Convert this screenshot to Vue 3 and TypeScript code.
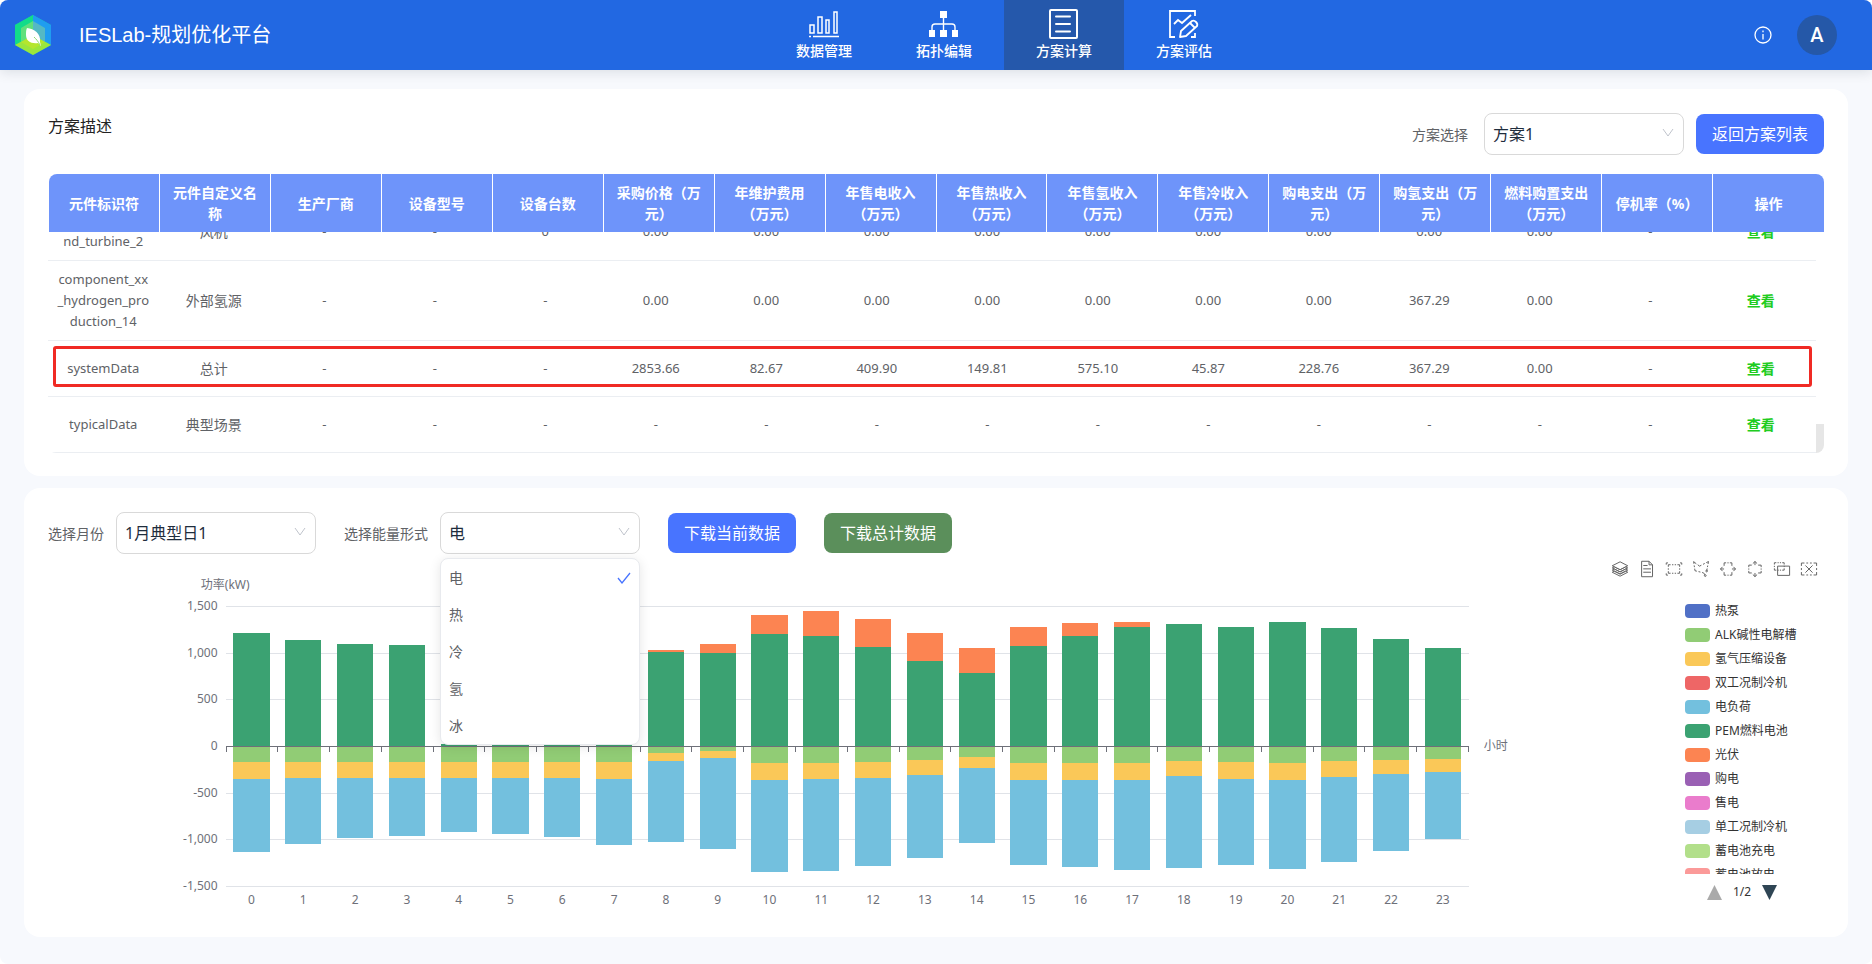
<script setup lang="ts">
import { computed, ref } from 'vue'

interface Series {
  name: string
  color: string
}

interface ToolIcon {
  label: string
  box: string
  d: string
}

const navItems = ['数据管理', '拓扑编辑', '方案计算', '方案评估']
const activeNav = ref('方案计算')

const plan = ref('方案1')
const month = ref('1月典型日1')
const energy = ref('电')
const energyOptions = ['电', '热', '冷', '氢', '冰']

const columns = [
  '元件标识符', '元件自定义名称', '生产厂商', '设备型号', '设备台数', '采购价格（万元）',
  '年维护费用（万元）', '年售电收入（万元）', '年售热收入（万元）', '年售氢收入（万元）',
  '年售冷收入（万元）', '购电支出（万元）', '购氢支出（万元）', '燃料购置支出（万元）',
  '停机率（%）', '操作',
]

const rows = [
  ['component_wind_turbine_2', '风机', '-', '-', '0', '0.00', '0.00', '0.00', '0.00', '0.00', '0.00', '0.00', '0.00', '0.00', '-'],
  ['component_xx_hydrogen_production_14', '外部氢源', '-', '-', '-', '0.00', '0.00', '0.00', '0.00', '0.00', '0.00', '0.00', '367.29', '0.00', '-'],
  ['systemData', '总计', '-', '-', '-', '2853.66', '82.67', '409.90', '149.81', '575.10', '45.87', '228.76', '367.29', '0.00', '-'],
  ['typicalData', '典型场景', '-', '-', '-', '-', '-', '-', '-', '-', '-', '-', '-', '-', '-'],
]

const legend: Series[] = [
  { name: '热泵', color: '#5070c6' },
  { name: 'ALK碱性电解槽', color: '#91cc75' },
  { name: '氢气压缩设备', color: '#fac858' },
  { name: '双工况制冷机', color: '#ee6666' },
  { name: '电负荷', color: '#73c0de' },
  { name: 'PEM燃料电池', color: '#3ba272' },
  { name: '光伏', color: '#fc8452' },
  { name: '购电', color: '#9a60b4' },
  { name: '售电', color: '#ea7ccc' },
  { name: '单工况制冷机', color: '#a6cee3' },
  { name: '蓄电池充电', color: '#b2df8a' },
  { name: '蓄电池放电', color: '#fb9a99' },
]

// Per hour: fuel cell, photovoltaic, electrolyser, compressor, load (kW)
const hourly: number[][] = [
  [1211, 0, 168, 182, 789], [1136, 0, 168, 172, 713], [1096, 0, 168, 172, 649],
  [1082, 0, 168, 172, 628], [17, 0, 168, 172, 585], [17, 0, 168, 172, 603],
  [17, 0, 168, 172, 635], [17, 0, 168, 182, 714], [1003, 22, 79, 82, 867],
  [993, 103, 57, 72, 971], [1200, 207, 179, 185, 989], [1175, 275, 179, 175, 985],
  [1057, 304, 168, 175, 946], [914, 297, 154, 153, 893], [778, 268, 114, 125, 804],
  [1071, 207, 179, 182, 910], [1175, 143, 179, 185, 936], [1275, 53, 179, 185, 968],
  [1303, 0, 161, 164, 986], [1275, 0, 168, 182, 928], [1332, 0, 179, 185, 950],
  [1268, 0, 161, 168, 910], [1146, 0, 146, 154, 821], [1050, 0, 136, 146, 711],
]
const axisMax = 1500
const ticks = [1500, 1000, 500, 0, -500, -1000, -1500]
const share = (v: number) => `${(v / (axisMax * 2)) * 100}%`

const bars = computed(() =>
  hourly.map(([pem, pv, alk, comp, load], hour) => ({
    hour,
    base: share(axisMax - alk - comp - load),
    parts: [
      { kind: 'pv', height: share(pv) },
      { kind: 'pem', height: share(pem) },
      { kind: 'alk', height: share(alk) },
      { kind: 'comp', height: share(comp) },
      { kind: 'load', height: share(load) },
    ],
  })),
)

const tools: ToolIcon[] = [
  { label: '切换为堆叠', box: '-1 1 62 58', d: 'M8.2,38.4l-8.4,4.1l30.6,15.3L60,42.5l-8.1-4.1l-21.5,11L8.2,38.4z M51.9,30l-8.1,4.2l-13.4,6.9l-13.9-6.9L8.2,30l-8.4,4.2l8.4,4.2l22.2,11l21.5-11l8.1-4.2L51.9,30z M51.9,21.7l-8.1,4.2L35.7,30l-5.3,2.8L24.9,30l-8.4-4.1l-8.3-4.2l-8.4,4.2L8.2,30l8.3,4.2l13.9,6.9l13.4-6.9l8.1-4.2l8.1-4.1L51.9,21.7z M30.4,2.2L-0.2,17.5l8.4,4.1l8.3,4.2l8.4,4.2l5.5,2.7l5.3-2.7l8.1-4.2l8.1-4.2l8.1-4.1L30.4,2.2z' },
  { label: '数据视图', box: '2 1 58 58', d: 'M17.5,17.3H33 M45.4,29.5h-28 M11.5,2v56H51V14.8L38.4,2H11.5z M38.4,2.2v12.7H51 M45.4,41.7h-28' },
  { label: '矩形选择', box: '-1 -2 92 74', d: 'M0.4,10V-0.2h9.8 M89.6,10V-0.2h-9.8 M0.4,60v10.2h9.8 M89.6,60v10.2h-9.8 M12.3,22.4V10.5h13.1 M33.6,10.5h7.8 M49.1,10.5h7.8 M77.5,22.4V10.5h-13 M12.3,31.1v8.2 M77.7,31.1v8.2 M12.3,47.6v11.9h13.1 M33.6,59.5h7.6 M49.1,59.5h7.7 M77.5,47.6v11.9h-13' },
  { label: '圈选', box: '8 3 55 56', d: 'M55.2,34.9c1.7,0,3.1,1.4,3.1,3.1s-1.4,3.1-3.1,3.1s-3.1-1.4-3.1-3.1S53.5,34.9,55.2,34.9z M50.4,51c1.7,0,3.1,1.4,3.1,3.1c0,1.7-1.4,3.1-3.1,3.1c-1.7,0-3.1-1.4-3.1-3.1C47.3,52.4,48.7,51,50.4,51z M55.6,37.1l1.5-7.8 M60.1,13.5l1.6-8.7l-7.8,4 M59,19l-1,5.3 M24,16.1l6.4,4.9l6.4-3.3 M48.5,11.6l-5.9,3.1 M19.1,12.8L9.7,5.1l1.1,7.7 M13.4,29.8l1,7.3l6.6,1.6 M11.6,18.4l1,6.1 M26.6,40.4L27.3,40.2l6.1,1.6 M49.9,52.1l-5.6-7.6l-4.9-1.2' },
  { label: '横向选择', box: '1 -1 73 62', d: 'M19.7,15.6V1.9H29 M34.8,1.9H40.4 M55.3,15.6V1.9H45.9 M19.7,44.4V58.1H29 M34.8,58.1H40.4 M55.3,44.4V58.1H45.9 M12.5,20.3l-9.4,9.6l9.6,9.8 M3.1,29.9h16.5 M62.5,20.3l9.4,9.6L62.3,39.7 M71.9,29.9H55.4' },
  { label: '纵向选择', box: '4 -6 70 70', d: 'M52.7,12h13.2v9 M65.9,26.6V32 M52.7,46.3h13.2v-9 M24.9,12H11.8v9 M11.8,26.6V32 M24.9,46.3H11.8v-9 M48.2,5.1l-9.3-9l-9.4,9.2 M38.9-3.9V12 M48.2,53.3l-9.3,9l-9.4-9.2 M38.9,62.3V46.4' },
  { label: '保持选择', box: '2 -1 84 70', d: 'M4,10.5V1h10.3 M20.7,1h6.1 M33,1h6.1 M55.4,10.5V1H45.2 M4,17.3v6.6 M55.6,17.3v6.6 M4,30.5V40h10.3 M20.7,40h6.1 M33,40h6.1 M55.4,30.5V40H45.2 M21,18.9h62.9v48.6H21V18.9z' },
  { label: '清除选择', box: '3 2 69 56', d: 'M22,14.7l30.9,31 M52.9,14.7L22,45.7 M4.7,16.8V4.2h13.1 M26,4.2h7.8 M41.6,4.2h7.8 M70.3,16.8V4.2H57.2 M4.7,25.9v8.6 M70.3,25.9v8.6 M4.7,43.2v12.6h13.1 M26,55.8h7.8 M41.6,55.8h7.8 M70.3,43.2v12.6H57.2' },
]
</script>

<template>
  <div class="page">
    <header class="topbar">
      <div class="brand">
        <svg class="logo" viewBox="0 0 36 40" aria-hidden="true">
          <path d="M18 0 36 10v20L18 40 0 30V10Z" fill="#14cfa0" />
          <path d="M18 0 0 10v20l18-10Z" fill="#12dc8a" />
          <path d="M18 0 36 10v20L18 20Z" fill="#1f9df0" />
          <path d="M0 30 18 20l18 10-18 10Z" fill="#9be63c" />
          <path d="M18 6 6 13v14l12-7Z" fill="#5fe07c" />
          <path d="M18 6 30 13v14l-12-7Z" fill="#54b9c4" />
          <path d="M6 27 18 20l12 7-12 7Z" fill="#b4e62e" />
          <path d="M12 13c7 1 14 5 13 14l1 4-3-3c-7 1-12-2-12-8 0-3 0-5 1-7Z" fill="#fff" />
          <path d="M19 22c2 2 4 4 6 8" fill="none" stroke="#8ad96a" />
        </svg>
        <h1>IESLab-规划优化平台</h1>
      </div>
      <nav class="nav">
        <button
          v-for="(item, i) in navItems"
          :key="item"
          type="button"
          :class="['nav-item', { active: item === activeNav }]"
          @click="activeNav = item"
        >
          <svg v-if="i === 0" viewBox="0 0 32 32" aria-hidden="true">
            <path d="M2 17h4v8H2ZM10 9h4v16h-4ZM18 12h3v13h-3ZM26 4h3v21h-3Z" stroke-width="1.5" />
            <path d="M1 28.5h2M5 28.5h26" stroke-width="1.5" />
          </svg>
          <svg v-else-if="i === 1" viewBox="0 0 32 32" aria-hidden="true">
            <path d="M15.5 9v14M4 23v-4q0-3 3-3h17q3 0 3 3v4" stroke-width="1.4" />
            <path class="solid" d="M12 3h7v7h-7ZM1 22h6v7H1ZM12 22h7v7h-7ZM24 22h6v7h-6Z" />
          </svg>
          <svg v-else-if="i === 2" viewBox="0 0 32 32" aria-hidden="true">
            <rect x="2" y="2" width="27" height="28" rx="1" stroke-width="2" />
            <path d="M8 8.5h14M8 16h14M8 23.5h14" stroke-width="2" stroke-linecap="round" />
          </svg>
          <svg v-else viewBox="0 0 32 32" aria-hidden="true">
            <path d="M7 29H2V3h25v5M27 25v4h-4" stroke-width="1.8" />
            <path d="m6 16 4-4 4 3 9-8" stroke-width="1.8" />
            <path d="m12 29 1-6 11-10q2-1 4 1t1 4L18 28ZM22 15l5 5" stroke-width="1.8" stroke-linejoin="round" />
          </svg>
          <span>{{ item }}</span>
        </button>
      </nav>
      <div class="user">
        <button type="button" class="info" aria-label="信息">
          <svg viewBox="0 0 18 18" aria-hidden="true">
            <circle cx="9" cy="9" r="8" />
            <path d="M9 8v5.5M9 4.5v1.8" />
          </svg>
        </button>
        <button type="button" class="avatar">A</button>
      </div>
    </header>

    <main>
      <section class="card">
        <div class="card-head">
          <h2>方案描述</h2>
          <div class="plan-tools">
            <label for="plan">方案选择</label>
            <div class="select">
              <select id="plan" v-model="plan"><option>方案1</option></select>
              <svg viewBox="0 0 12 12" aria-hidden="true"><path d="m1 2 5 7 5-7" /></svg>
            </div>
            <button type="button" class="btn">返回方案列表</button>
          </div>
        </div>

        <div class="grid-table">
          <div class="head-wrap">
            <table>
              <thead>
                <tr><th v-for="c in columns" :key="c" scope="col">{{ c }}</th></tr>
              </thead>
            </table>
          </div>
          <div class="body-wrap">
            <table class="body-table">
              <tbody>
                <tr v-for="row in rows" :key="row[0]" :class="{ marked: row[0] === 'systemData' }">
                  <td v-for="(cell, i) in row" :key="i" :class="{ name: i === 1 }">{{ cell }}</td>
                  <td class="action"><a href="#">查看</a></td>
                </tr>
              </tbody>
            </table>
            <div class="scroll-rail"><div class="thumb"></div></div>
          </div>
        </div>
      </section>

      <section class="card">
        <div class="filters">
          <label for="month">选择月份</label>
          <div class="select">
            <select id="month" v-model="month"><option>1月典型日1</option></select>
            <svg viewBox="0 0 12 12" aria-hidden="true"><path d="m1 2 5 7 5-7" /></svg>
          </div>
          <label for="energy" class="next">选择能量形式</label>
          <div class="select">
            <select id="energy" v-model="energy">
              <option v-for="o in energyOptions" :key="o">{{ o }}</option>
            </select>
            <svg viewBox="0 0 12 12" aria-hidden="true"><path d="m1 2 5 7 5-7" /></svg>
            <ul class="menu" role="listbox" aria-label="选择能量形式">
              <li
                v-for="o in energyOptions"
                :key="o"
                role="option"
                :aria-selected="o === energy"
                @click="energy = o"
              >
                {{ o }}
                <svg v-if="o === energy" viewBox="0 0 14 12" aria-hidden="true"><path d="m1 6 4 5 8-10" /></svg>
              </li>
            </ul>
          </div>
          <button type="button" class="btn next">下载当前数据</button>
          <button type="button" class="btn green next">下载总计数据</button>
        </div>

        <div class="chart">
          <div class="y-name">功率(kW)</div>
          <div class="toolbox">
            <button v-for="t in tools" :key="t.label" type="button" :aria-label="t.label">
              <svg :viewBox="t.box" aria-hidden="true"><path :d="t.d" /></svg>
            </button>
          </div>
          <div class="y-axis">
            <span v-for="t in ticks" :key="t">{{ t.toLocaleString('en-US') }}</span>
          </div>
          <div class="plot">
            <div class="lines"><i v-for="t in ticks" :key="t"></i></div>
            <div class="bars">
              <div v-for="b in bars" :key="b.hour" class="slot">
                <div v-for="p in b.parts" :key="p.kind" :class="['bar', p.kind]" :style="{ height: p.height }"></div>
                <div :style="{ height: b.base }"></div>
              </div>
            </div>
            <div class="zero"><i v-for="b in bars" :key="b.hour"></i></div>
          </div>
          <div class="x-axis"><span v-for="b in bars" :key="b.hour">{{ b.hour }}</span></div>
          <div class="x-name">小时</div>
          <div class="legend">
            <ul>
              <li v-for="s in legend" :key="s.name">
                <i :style="{ background: s.color }"></i><span>{{ s.name }}</span>
              </li>
            </ul>
            <div class="pager">
              <button type="button" aria-label="上一页" disabled>
                <svg viewBox="0 0 15 15"><path d="M0 15 7.5 0 15 15Z" fill="#aaa" /></svg>
              </button>
              <span>1/2</span>
              <button type="button" aria-label="下一页">
                <svg viewBox="0 0 15 15"><path d="M0 0h15L7.5 15Z" fill="#2f4554" /></svg>
              </button>
            </div>
          </div>
        </div>
      </section>
    </main>
  </div>
</template>

<style>
body {
  margin: 0;
  background: #fff;
}
</style>

<style scoped>
* {
  box-sizing: border-box;
}

.page {
  min-height: 100vh;
  overflow: hidden;
  border-radius: 8px;
  background: #f7f9fd;
  color: #606266;
  font: 14px/21px "Noto Sans", "Noto Sans CJK SC", sans-serif;
}

button {
  padding: 0;
  border: 0;
  background: none;
  color: inherit;
  font: inherit;
  cursor: pointer;
}

ul {
  margin: 0;
  padding: 0;
  list-style: none;
}

.topbar {
  display: grid;
  grid-template-columns: 191fr 480px 157fr;
  align-items: center;
  height: 70px;
  background: #2268e2;
  color: #fff;
  box-shadow: 0 2px 12px rgba(0, 21, 41, 0.12);
}

.brand {
  display: flex;
  align-items: center;
  gap: 28px;
  padding-left: 15px;
}

.logo {
  width: 36px;
  height: 40px;
}

h1 {
  margin: 0;
  font: 400 20px/30px "Liberation Sans", "Noto Sans CJK SC", sans-serif;
}

.nav {
  display: flex;
}

.nav-item {
  display: flex;
  flex: 1;
  flex-direction: column;
  align-items: center;
  height: 70px;
  padding-top: 8px;
  font-weight: 500;
}

.nav-item.active {
  background: #2558ab;
}

.nav-item svg {
  width: 32px;
  height: 32px;
  fill: none;
  stroke: #fff;
}

.nav-item .solid {
  fill: #fff;
  stroke: none;
}

.user {
  display: flex;
  align-items: center;
  justify-content: flex-end;
  gap: 25px;
  padding-right: 35px;
}

.info {
  width: 18px;
  height: 18px;
}

.info svg {
  display: block;
  fill: none;
  stroke: #fff;
  stroke-width: 1.3;
}

.avatar {
  width: 40px;
  height: 40px;
  border-radius: 50%;
  background: #2558a8;
  font: 500 20px/40px Roboto, "Liberation Sans", sans-serif;
}

main {
  display: flex;
  flex-direction: column;
  gap: 12px;
  padding: 19px 24px 24px;
}

.card {
  padding: 24px 24px 23px;
  border-radius: 16px;
  background: #fff;
}

.card-head {
  display: flex;
  justify-content: space-between;
  margin-bottom: 19px;
}

h2 {
  margin: 0;
  color: #222;
  font-size: 16px;
  font-weight: 400;
  line-height: 26px;
}

.plan-tools,
.filters {
  display: flex;
  align-items: center;
}

.plan-tools label {
  margin-right: 16px;
}

.plan-tools .btn {
  margin-left: 12px;
}

.filters label {
  margin-right: 12px;
}

.filters .next {
  margin-left: 28px;
}

.select {
  position: relative;
  width: 200px;
}

select {
  display: block;
  width: 100%;
  height: 42px;
  padding: 0 8px;
  border: 1px solid #d9d9d9;
  border-radius: 8px;
  appearance: none;
  background: #fff;
  color: #1f2d3d;
  font: inherit;
  font-size: 16px;
}

.select > svg {
  position: absolute;
  top: 14px;
  right: 10px;
  width: 12px;
  height: 12px;
  fill: none;
  stroke: #c0c4cc;
  pointer-events: none;
}

.btn {
  height: 40px;
  padding: 0 16px;
  border-radius: 8px;
  background: #4874ff;
  color: #fff;
  font-size: 16px;
}

.btn.green {
  background: #5b8f5b;
}

table {
  width: 100%;
  border-spacing: 0;
  table-layout: fixed;
}

.head-wrap {
  overflow: hidden;
  margin-left: 1px;
  border-radius: 8px 8px 0 0;
}

th {
  height: 58px;
  padding: 0 12px;
  border-right: 1px solid #fff;
  background: #6e94fa;
  color: #fff;
  font-weight: 700;
}

th:last-child {
  border-right: 0;
}

.body-wrap {
  display: flex;
  align-items: flex-end;
  height: 221px;
  overflow: hidden;
  border-radius: 0 0 8px 8px;
}

.body-table {
  flex: 1;
}

td {
  height: 56px;
  padding: 8px;
  border-bottom: 1px solid #ebeef2;
  font-size: 13px;
  text-align: center;
  word-break: break-all;
}

td.name,
td.action {
  font-size: 14px;
}

tr.marked {
  position: relative;
}

.marked .action::after {
  position: absolute;
  inset: 5px 4px 10px 5px;
  border: 3px solid #f02a24;
  border-radius: 3px;
  content: "";
  pointer-events: none;
}

td a {
  color: #20cc20;
  font-weight: 700;
  text-decoration: none;
}

.scroll-rail {
  display: flex;
  align-items: flex-end;
  align-self: stretch;
  width: 8px;
}

.thumb {
  width: 8px;
  height: 29px;
  background: #e6e6e6;
}

.menu {
  position: absolute;
  z-index: 2;
  top: 46px;
  left: 0;
  width: 100%;
  border: 1px solid #e8eaee;
  border-radius: 8px;
  background: #fff;
  box-shadow: 0 2px 12px rgba(0, 0, 0, 0.1);
}

.menu li {
  display: flex;
  align-items: center;
  justify-content: space-between;
  height: 37px;
  padding: 0 8px;
}

.menu svg {
  width: 14px;
  height: 12px;
  fill: none;
  stroke: #4874ff;
  stroke-width: 1.3;
}

.chart {
  display: grid;
  grid-template-columns: 10% 1fr 20%;
  grid-template-rows: 50px 282px 28px;
  color: #6e7079;
  font-size: 12px;
  line-height: 16px;
}

.y-name {
  display: flex;
  grid-area: 1 / 1 / 2 / 2;
  align-items: center;
  justify-content: flex-end;
  margin: 12px -24px 0 0;
}

.toolbox {
  display: flex;
  grid-area: 1 / 3 / 2 / 4;
  align-items: flex-start;
  justify-content: flex-end;
  gap: 11px;
  padding: 7px 7px 0 0;
}

.toolbox button,
.toolbox svg {
  display: block;
  width: 16px;
  height: 16px;
}

.toolbox svg {
  overflow: visible;
  fill: none;
  stroke: #666;
}

.toolbox path {
  vector-effect: non-scaling-stroke;
}

.y-axis {
  display: flex;
  grid-area: 2 / 1 / 3 / 2;
  flex-direction: column;
  justify-content: space-between;
  margin: -6px 0 -8px;
  padding-right: 8px;
  text-align: right;
}

.plot {
  position: relative;
  grid-area: 2 / 2 / 3 / 3;
  margin-top: 2px;
}

.lines {
  position: absolute;
  inset: 0 0 -1px;
  display: flex;
  flex-direction: column;
  justify-content: space-between;
}

.lines i {
  height: 1px;
  background: #e0e3e8;
}

.bars {
  position: relative;
  display: flex;
  height: 100%;
}

.slot {
  display: flex;
  flex: 1;
  flex-direction: column;
  align-items: center;
  justify-content: flex-end;
}

.bar {
  width: 70%;
}

.pv {
  background: #fc8452;
}

.pem {
  background: #3ba272;
}

.alk {
  background: #91cc75;
}

.comp {
  background: #fac858;
}

.load {
  background: #73c0de;
}

.zero {
  position: absolute;
  top: 50%;
  left: 0;
  display: flex;
  width: 100%;
  height: 6px;
  border-top: 1px solid #6e7079;
  border-right: 1px solid #6e7079;
}

.zero i {
  flex: 1;
  border-left: 1px solid #6e7079;
}

.x-axis {
  display: flex;
  grid-area: 3 / 2 / 4 / 3;
  padding-top: 6px;
  text-align: center;
}

.x-axis span {
  flex: 1;
}

.x-name {
  grid-area: 2 / 3 / 3 / 4;
  align-self: center;
  justify-self: start;
  padding: 2px 0 0 15px;
}

.legend {
  grid-area: 2 / 3 / 4 / 4;
  justify-self: end;
  width: 139px;
  color: #333;
}

.legend ul {
  display: flex;
  flex-direction: column;
  gap: 10px;
  height: 270px;
  overflow: hidden;
}

.legend li {
  display: flex;
  flex: none;
  align-items: center;
  gap: 5px;
  height: 14px;
  line-height: 14px;
}

.legend i {
  width: 25px;
  height: 14px;
  border-radius: 4px;
}

.pager {
  display: flex;
  align-items: center;
  gap: 11px;
  margin: 10px 0 0 22px;
}

.pager svg {
  display: block;
  width: 15px;
  height: 15px;
}
</style>
